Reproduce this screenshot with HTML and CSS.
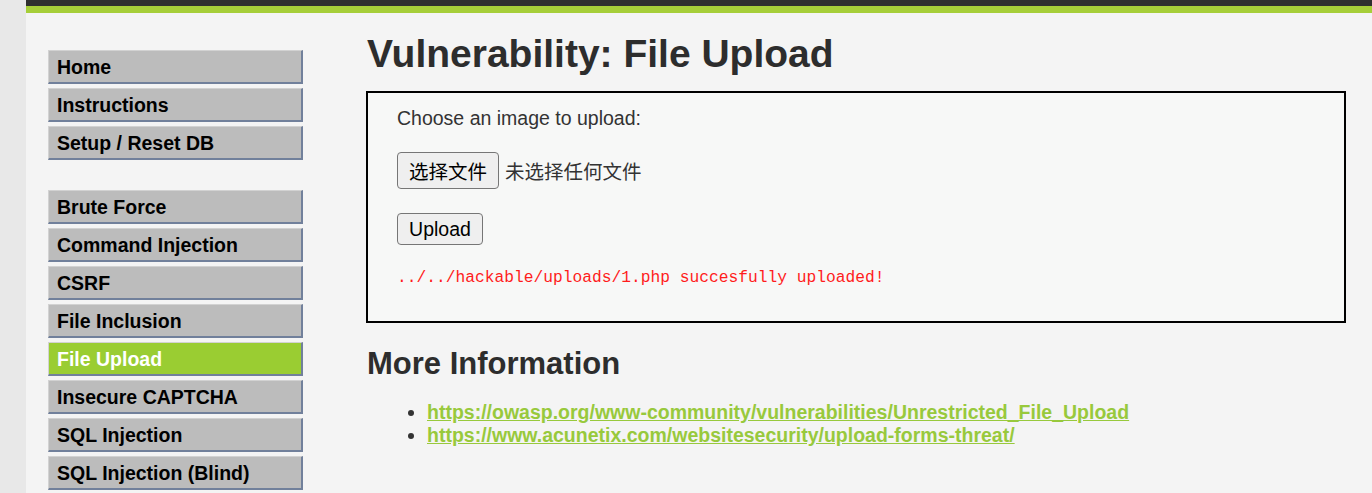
FILE: index.html
```html
<!DOCTYPE html>
<html lang="en">
<head>
<meta charset="utf-8">
<title>Vulnerability: File Upload</title>
<link rel="stylesheet" href="styles.css">
</head>
<body>
<div class="page">
  <div class="topbar"></div>
  <div class="greenbar"></div>
  <div class="layout">
    <nav class="menu">
      <ul class="menu-group">
        <li><a class="menu-item" href="#">Home</a></li>
        <li><a class="menu-item" href="#">Instructions</a></li>
        <li><a class="menu-item" href="#">Setup / Reset DB</a></li>
      </ul>
      <ul class="menu-group">
        <li><a class="menu-item" href="#">Brute Force</a></li>
        <li><a class="menu-item" href="#">Command Injection</a></li>
        <li><a class="menu-item" href="#">CSRF</a></li>
        <li><a class="menu-item" href="#">File Inclusion</a></li>
        <li><a class="menu-item selected" href="#">File Upload</a></li>
        <li><a class="menu-item" href="#">Insecure CAPTCHA</a></li>
        <li><a class="menu-item" href="#">SQL Injection</a></li>
        <li><a class="menu-item" href="#">SQL Injection (Blind)</a></li>
      </ul>
    </nav>
    <main class="content">
      <h1 class="title">Vulnerability: File Upload</h1>
      <div class="vuln-box">
        <p class="label">Choose an image to upload:</p>
        <div class="file-row">
          <button class="btn btn-file" type="button">选择文件</button>
          <span class="file-status">未选择任何文件</span>
        </div>
        <div class="upload-row">
          <button class="btn btn-upload" type="button">Upload</button>
        </div>
        <pre class="message">../../hackable/uploads/1.php succesfully uploaded!</pre>
      </div>
      <h2 class="subtitle">More Information</h2>
      <ul class="links">
        <li><a href="#">https://owasp.org/www-community/vulnerabilities/Unrestricted_File_Upload</a></li>
        <li><a href="#">https://www.acunetix.com/websitesecurity/upload-forms-threat/</a></li>
      </ul>
    </main>
  </div>
</div>
</body>
</html>
```

FILE: styles.css
```css
html, body {
  margin: 0;
  padding: 0;
}
body {
  background: #e8e8e8;
  font-family: "Liberation Sans", Arial, "Noto Sans CJK SC", sans-serif;
  color: #333;
  overflow: hidden;
}
.page {
  margin-left: 26px;
  height: 493px;
  background: #f4f4f4;
  overflow: hidden;
}
.topbar {
  height: 6px;
  background: #2f2f2f;
}
.greenbar {
  height: 7px;
  background: #a6ce39;
}
.layout {
  display: flex;
  padding-left: 22px;
}
.menu {
  width: 255px;
  flex: none;
  margin-top: 37px;
}
.menu-group {
  list-style: none;
  margin: 0;
  padding: 0;
  display: flex;
  flex-direction: column;
  gap: 4px;
}
.menu-group + .menu-group {
  margin-top: 30px;
}
.menu-item {
  box-sizing: border-box;
  display: flex;
  align-items: center;
  height: 34px;
  padding-left: 8px;
  padding-top: 1px;
  background: #bcbcbc;
  border-top: 1px solid #d2d2d2;
  border-left: 1px solid #d2d2d2;
  border-bottom: 2px solid #71809b;
  border-right: 2px solid #71809b;
  color: #000;
  font-weight: bold;
  font-size: 19.5px;
  text-decoration: none;
}
.menu-item.selected {
  background: #9acd32;
  color: #fff;
}
.content {
  margin-left: 63px;
  flex: 1;
  padding-right: 26px;
}
.title {
  margin: 18px 0 0 1px;
  font-size: 39px;
  line-height: 45px;
  font-weight: bold;
  color: #2d2d2d;
}
.vuln-box {
  margin-top: 15px;
  border: 2px solid #000;
  background: #f7f8f7;
  padding: 14px 30px 34px 29px;
}
.label {
  margin: 0;
  font-size: 19.5px;
  line-height: 23px;
}
.file-row {
  margin-top: 22px;
  display: flex;
  align-items: center;
  gap: 6px;
}
.btn {
  box-sizing: border-box;
  font-family: "Liberation Sans", Arial, "Noto Sans CJK SC", sans-serif;
  font-size: 19.5px;
  color: #000;
  background: #efefef;
  border: 1px solid #767676;
  border-radius: 4px;
  padding: 0;
  margin: 0;
}
.btn-file {
  height: 37px;
  width: 102px;
}
.btn-upload {
  height: 32px;
  width: 86px;
}
.file-status {
  font-size: 19.5px;
  color: #333;
}
.upload-row {
  margin-top: 24px;
  display: flex;
}
.message {
  margin: 23px 0 0 0;
  font-family: "Liberation Mono", "Courier New", monospace;
  font-size: 16.25px;
  line-height: 19px;
  color: #ff1c1c;
}
.subtitle {
  margin: 23px 0 0 1px;
  font-size: 31px;
  line-height: 35px;
  font-weight: bold;
  color: #2d2d2d;
}
.links {
  margin: 20px 0 0 0;
  padding-left: 61px;
  font-size: 19.5px;
  line-height: 23px;
}
.links a {
  color: #98c93c;
  font-weight: bold;
  text-decoration: underline;
}
```
